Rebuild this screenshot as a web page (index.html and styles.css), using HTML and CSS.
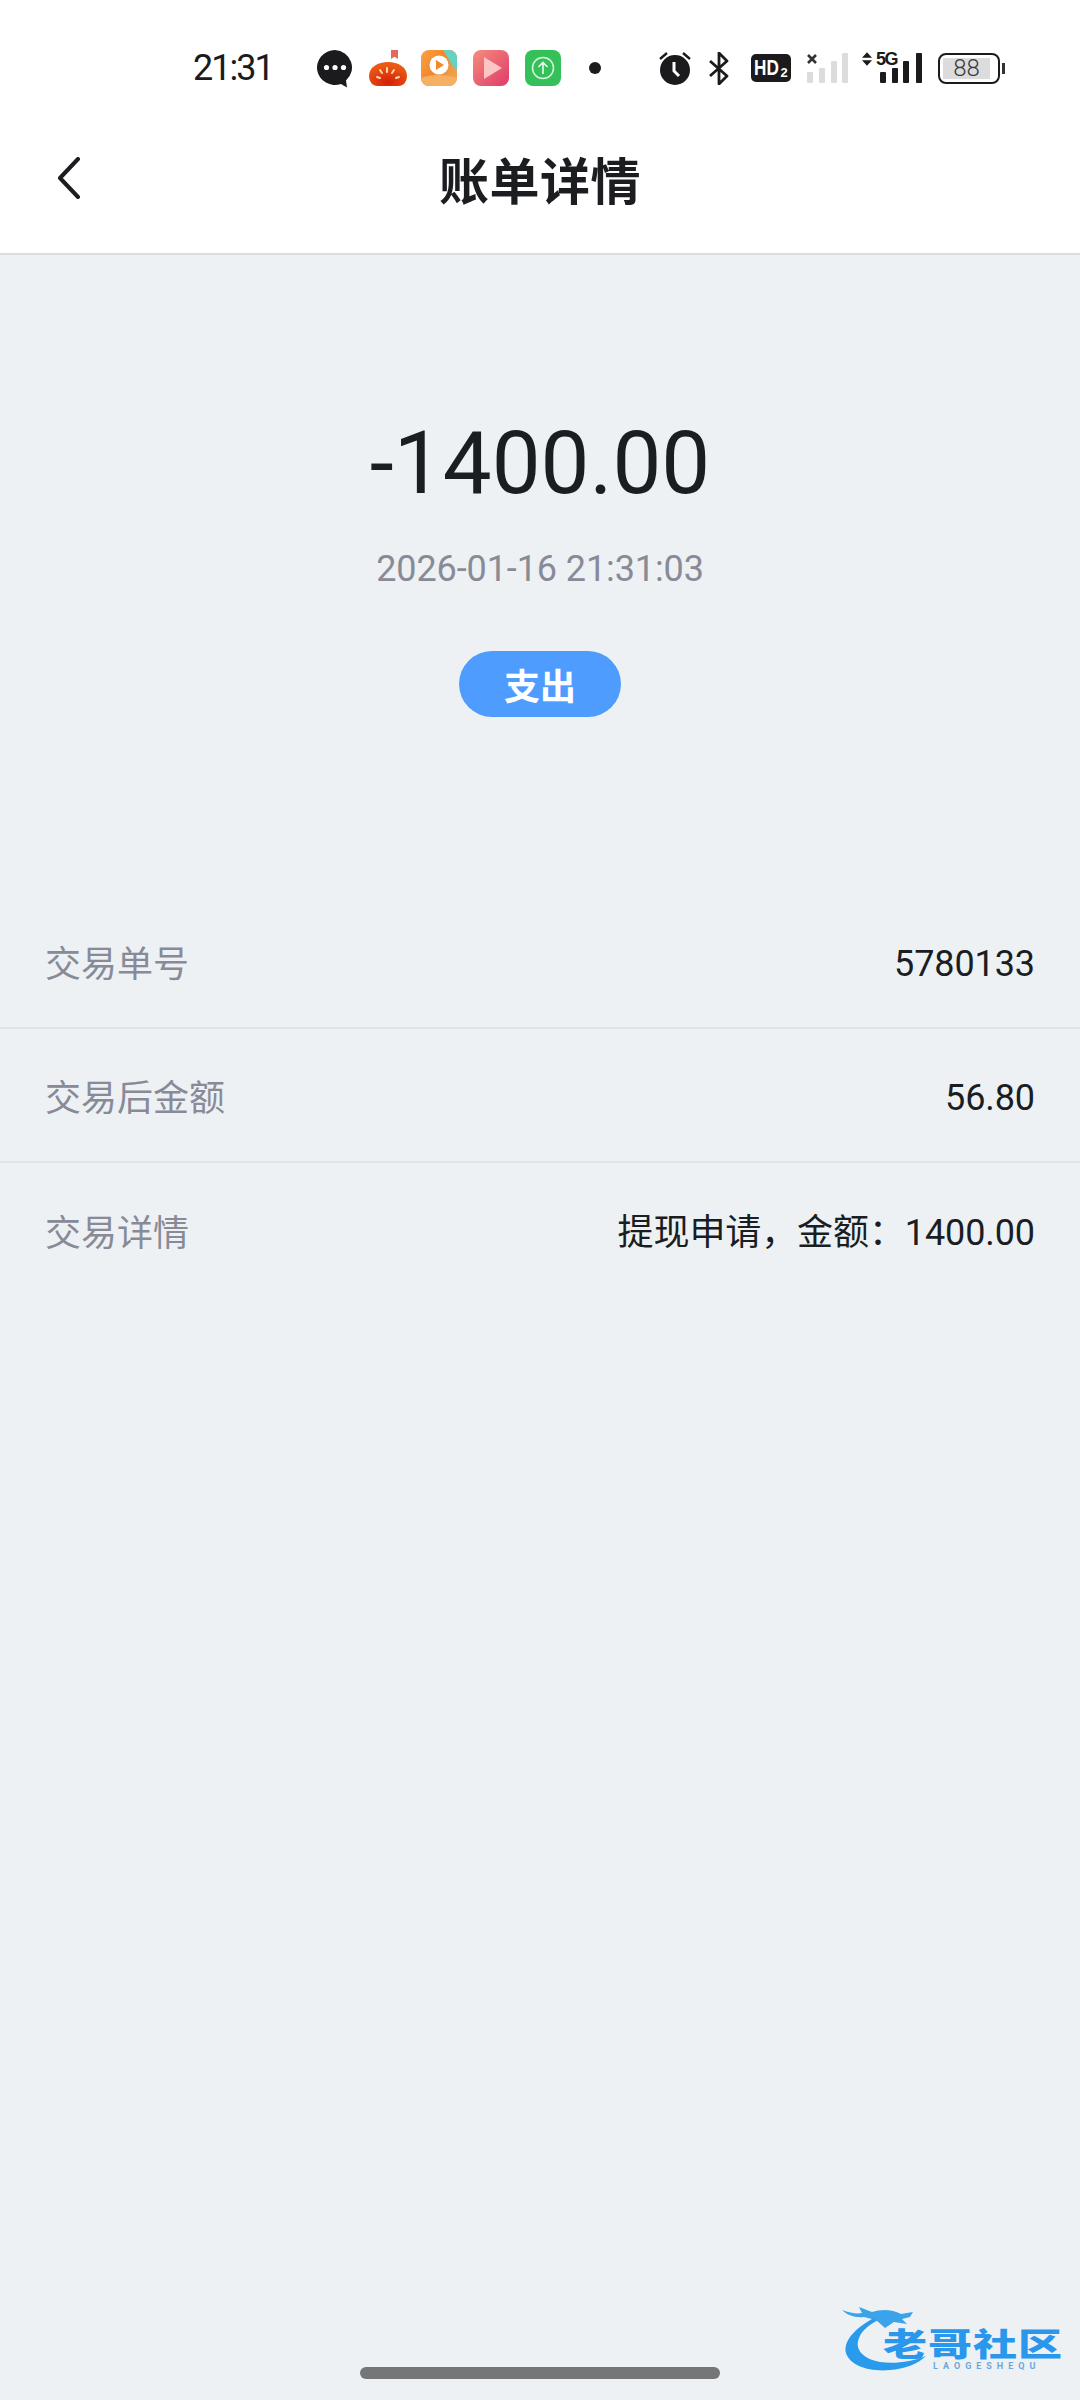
FILE: index.html
```html
<!DOCTYPE html>
<html lang="zh-CN">
<head>
<meta charset="utf-8">
<title>账单详情</title>
<link rel="stylesheet" href="styles.css">
</head>
<body>
<div class="phone">
  <header class="top">
    <div class="status">
      <span class="time">21:31</span>
      <svg class="ic ic-chat" viewBox="0 0 36 38"><path d="M18 0a18 17.500 0 1 0 6 34l6 3.500-1-7A18 17.500 0 0 0 18 0z" fill="#1b1b1d"/><circle cx="9.500" cy="17.500" r="2.600" fill="#fff"/><circle cx="18" cy="17.500" r="2.600" fill="#fff"/><circle cx="26.500" cy="17.500" r="2.600" fill="#fff"/></svg>
      <svg class="ic ic-tomato" viewBox="0 0 38 36"><defs><radialGradient id="gt" cx="0.500" cy="0.850" r="0.700"><stop offset="0" stop-color="#d4200a"/><stop offset="1" stop-color="#ea5a14"/></radialGradient></defs><path d="M22 0h7v9l-3.500-2.200L22 9z" fill="#e5675c"/><path d="M0 26C0 17 9 12 19 12s19 5 19 14c0 5-3 10-9 10H9c-6 0-9-5-9-10z" fill="url(#gt)"/><g stroke="#fbd9b0" stroke-width="2" stroke-linecap="round"><path d="M18 18v4M11 20l2 3M25 20l-2 3M8 27l3 1M30 27l-3 1"/></g></svg>
      <svg class="ic ic-app" viewBox="0 0 36 36"><defs><linearGradient id="ga" x1="0" y1="0" x2="1" y2="0.600"><stop offset="0" stop-color="#f9a245"/><stop offset="0.500" stop-color="#f4862c"/><stop offset="1" stop-color="#eda24e"/></linearGradient></defs><rect width="36" height="36" rx="8" fill="url(#ga)"/><path d="M22 0h6a8 8 0 0 1 8 8v12c-5-2-8-12-14-20z" fill="#66d2c2"/><circle cx="18" cy="15" r="9.500" fill="#fff"/><path d="M15 10l8 5-8 5z" fill="#f08a2c"/><path d="M0 28c10-4 24-4 36 0v0a8 8 0 0 1-8 8H8a8 8 0 0 1-8-8z" fill="#f6b063"/></svg>
      <svg class="ic ic-app" viewBox="0 0 36 36"><defs><linearGradient id="gb" x1="0" y1="0" x2="1" y2="1"><stop offset="0" stop-color="#f58d7c"/><stop offset="1" stop-color="#e03a6b"/></linearGradient></defs><rect width="36" height="36" rx="8" fill="url(#gb)"/><path d="M11 7l18 11-18 11z" fill="#fbc6c4"/></svg>
      <svg class="ic ic-app" viewBox="0 0 36 36"><rect width="36" height="36" rx="8" fill="#34c159"/><circle cx="18" cy="18" r="10.500" fill="none" stroke="#d9f5df" stroke-width="1.500"/><path d="M18 24V12.500M13.500 17l4.500-4.500 4.500 4.500" fill="none" stroke="#eafbee" stroke-width="1.600"/></svg>
      <span class="dot"></span>
      <svg class="ic ic-alarm" viewBox="0 0 32 33"><circle cx="16" cy="18" r="15" fill="#1b1b1d"/><path d="M1 7l7-6M31 7l-7-6" stroke="#1b1b1d" stroke-width="2.400"/><path d="M15 10v9l5 5" fill="none" stroke="#fff" stroke-width="3"/></svg>
      <svg class="ic ic-bt" viewBox="0 0 20 33"><path d="M1 9l17 15-8 8V1l8 8L1 24" fill="none" stroke="#1b1b1d" stroke-width="2.800" stroke-linejoin="round"/></svg>
      <span class="hd"><span class="hd-main">HD</span><span class="hd-sub">2</span></span>
      <svg class="ic ic-sim1" viewBox="0 0 43 30"><path d="M1 2l8 8M9 2L1 10" stroke="#333" stroke-width="2.600"/><g fill="#dcdcdc"><rect y="19" width="6" height="11" rx="1"/><rect x="12" y="15" width="6" height="15" rx="1"/><rect x="24" y="8" width="6" height="22" rx="1"/><rect x="35" width="6" height="30" rx="1"/></g></svg>
      <span class="sim2">
        <svg class="sim2-arrows" viewBox="0 0 11 15"><path d="M5.500 0L11 6H0zM5.500 15L0 9h11z" fill="#1b1b1d"/></svg>
        <span class="sim2-label">5G</span>
        <svg class="sim2-bars" viewBox="0 0 42 30"><g fill="#1b1b1d"><rect y="19" width="6" height="11" rx="1"/><rect x="12" y="15" width="6" height="15" rx="1"/><rect x="23" y="8" width="6" height="22" rx="1"/><rect x="36" width="6" height="30" rx="1"/></g></svg>
      </span>
      <span class="battery"><span class="battery-body"><span class="battery-level">88</span></span><span class="battery-tip"></span></span>
    </div>
    <div class="nav">
      <svg class="back" viewBox="0 0 24 42"><path d="M21 2L3 21l18 19" fill="none" stroke="#1b1d21" stroke-width="4" stroke-linecap="round" stroke-linejoin="round"/></svg>
      <h1 class="title">账单详情</h1>
    </div>
  </header>
  <main class="content">
    <section class="summary">
      <div class="amount">-1400.00</div>
      <div class="stamp">2026-01-16 21:31:03</div>
      <div class="pill">支出</div>
    </section>
    <section class="rows">
      <div class="row"><span class="label">交易单号</span><span class="value">5780133</span></div>
      <div class="row"><span class="label">交易后金额</span><span class="value">56.80</span></div>
      <div class="row"><span class="label">交易详情</span><span class="value">提现申请，金额：1400.00</span></div>
    </section>
  </main>
  <div class="mark">
    <svg class="mark-dragon" viewBox="0 0 90 70"><path d="M34 13C12 24 1 38 4 49c4 13 24 19 44 17 14-1 28-6 36-14-14 6-32 8-46 6C22 55 12 46 17 34c3-8 11-14 23-20z" fill="#2a9aec"/><path d="M0 6c8 3 15 4 20 3L17 3l13 5c9-3 20-3 29 2l12-2-3 5-8 2 5 5-13-2-9 6-9-8-12-3C13 14 5 11 0 6z" fill="#3aa3ea"/></svg>
    <div class="mark-copy">
      <div class="mark-cn">老哥社区</div>
      <div class="mark-en">LAOGESHEQU</div>
    </div>
  </div>
  <div class="home"></div>
</div>
</body>
</html>
```
FILE: styles.css
```css
* { box-sizing: border-box; }
html, body { margin: 0; padding: 0; }
body { width: 1080px; height: 2400px; overflow: hidden; font-family: Roboto, "Noto Sans CJK SC", sans-serif; }
.phone { position: relative; width: 1080px; height: 2400px; background: #edf1f4; display: flex; flex-direction: column; }
.top { background: #fff; height: 255px; border-bottom: 2px solid #dcdddf; flex: none; }
.status { height: 124px; padding: 12px 0 0 193px; display: flex; align-items: center; }
.time { font-size: 36px; font-weight: 400; letter-spacing: -2px; color: #1b1b1d; width: 124px; }
.ic { display: block; flex: none; }
.ic-chat { width: 36px; height: 38px; margin-right: 16px; margin-top: 2px; }
.ic-tomato { width: 38px; height: 36px; margin-right: 14px; }
.ic-app { width: 36px; height: 36px; margin-right: 16px; }
.dot { width: 12px; height: 12px; border-radius: 50%; background: #1b1b1d; margin: 0 58px 0 12px; flex: none; }
.ic-alarm { width: 32px; height: 33px; margin-right: 18px; }
.ic-bt { width: 20px; height: 33px; margin-right: 22px; }
.hd { display: flex; justify-content: center; width: 40px; height: 28px; background: #1b1b1d; color: #fff; border-radius: 5px; margin-right: 16px; flex: none; font-family: "Liberation Sans", sans-serif; font-weight: 700; }
.hd-main { display: block; width: 26px; font-size: 22px; line-height: 28px; transform: scaleX(0.78); transform-origin: left center; white-space: nowrap; }
.hd-sub { display: block; font-size: 13px; line-height: 13px; margin-top: 12px; }
.ic-sim1 { width: 43px; height: 30px; margin-right: 12px; }
.sim2 { position: relative; display: block; width: 60px; height: 30px; margin-right: 16px; flex: none; }
.sim2-arrows { position: absolute; left: 0; top: -1px; width: 10px; height: 14px; }
.sim2-label { position: absolute; left: 14px; top: -3px; font: 700 18px/18px "Liberation Sans", sans-serif; letter-spacing: -1.500px; color: #1b1b1d; }
.sim2-bars { position: absolute; left: 18px; top: 0; width: 42px; height: 30px; }
.battery { display: flex; align-items: center; flex: none; }
.battery-body { width: 62px; height: 31px; border: 2.500px solid #1b1b1d; border-radius: 8px; padding: 3px 8px 3px 3px; display: flex; }
.battery-level { flex: 1; background: #dcdcdc; color: #3c3c3e; font-size: 24px; line-height: 20px; text-align: center; font-weight: 300; }
.battery-tip { width: 3px; height: 11px; background: #333; margin-left: 2px; }
.nav { position: relative; height: 129px; display: flex; align-items: center; justify-content: center; padding-bottom: 22px; }
.back { position: absolute; left: 57px; top: 33px; width: 24px; height: 42px; }
.title { margin: 0; font: 700 50px/64px "Noto Sans CJK SC", sans-serif; letter-spacing: 0.5px; color: #1b1d21; }
.content { flex: 1; }
.summary { display: flex; flex-direction: column; align-items: center; padding-top: 156px; }
.amount { font-size: 87px; line-height: 104px; color: #1a1e23; }
.stamp { font-size: 36px; line-height: 44px; letter-spacing: -0.1px; color: #888b97; margin-top: 32px; }
.pill { width: 162px; height: 66px; border-radius: 33px; background: #4f9cff; color: #fff; font: 700 36px/66px "Noto Sans CJK SC", sans-serif; text-align: center; margin-top: 60px; }
.rows { margin-top: 178px; }
.row { height: 134px; display: flex; justify-content: space-between; align-items: center; padding: 0 45px; border-bottom: 2px solid #e0e3e8; }
.row:last-child { border-bottom: 0; }
.label { font: 400 36px/48px "Noto Sans CJK SC", sans-serif; color: #888b97; }
.value { font: 400 36px/48px Roboto, "Noto Sans CJK SC", sans-serif; letter-spacing: -0.1px; color: #1a1d22; margin-top: 6px; }
.mark { position: absolute; left: 842px; top: 2304px; width: 225px; height: 72px; }
.mark-dragon { position: absolute; left: 0; top: 0; width: 90px; height: 70px; }
.mark-copy { position: absolute; left: 41px; top: 18px; width: 184px; }
.mark-cn { font: 900 44px/40px "Noto Sans CJK SC", sans-serif; letter-spacing: 1px; white-space: nowrap; transform: scaleY(0.72); color: #2a97ec; }
.mark-en { font: 700 9px/10px Roboto, sans-serif; letter-spacing: 5px; color: #6ba8dd; margin: -1px 0 0 50px; white-space: nowrap; }
.home { position: absolute; left: 360px; top: 2367px; width: 360px; height: 12px; border-radius: 6px; background: #757678; }
```
